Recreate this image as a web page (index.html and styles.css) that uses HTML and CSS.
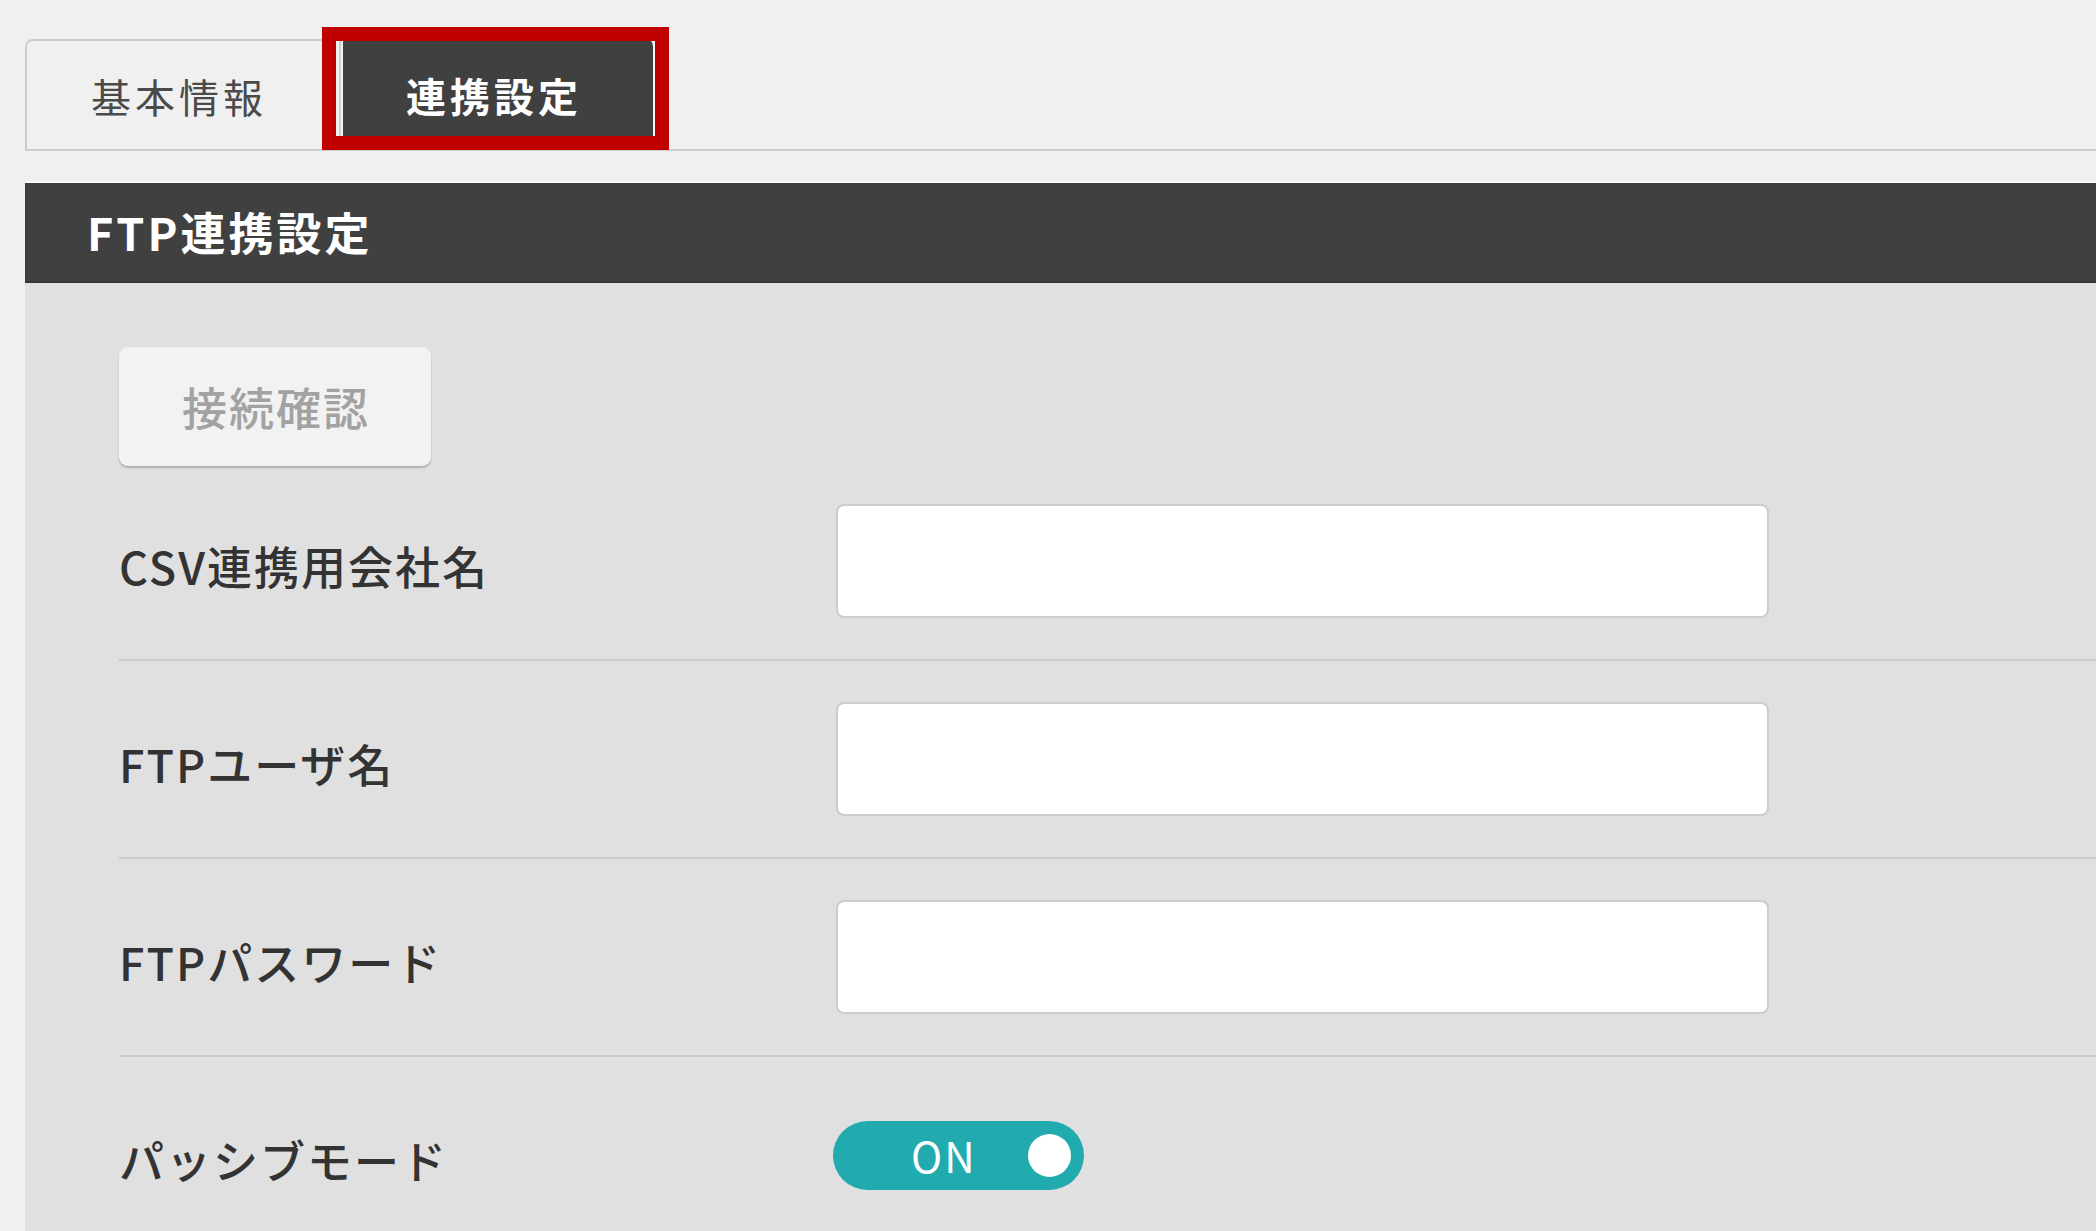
FILE: index.html
```html
<!DOCTYPE html>
<html lang="ja">
<head>
<meta charset="utf-8">
<title>連携設定</title>
<link rel="stylesheet" href="styles.css">
</head>
<body>
<div class="page">
  <div class="tabs">
    <div class="tab">基本情報</div>
    <div class="tab tab-active">連携設定<span class="highlight"></span></div>
  </div>
  <div class="section-header">FTP連携設定</div>
  <div class="panel">
    <button class="btn-check" type="button">接続確認</button>
    <div class="row">
      <div class="label">CSV連携用会社名</div>
      <input class="field" type="text">
    </div>
    <div class="row">
      <div class="label">FTPユーザ名</div>
      <input class="field" type="text">
    </div>
    <div class="row">
      <div class="label">FTPパスワード</div>
      <input class="field" type="password">
    </div>
    <div class="row row-last">
      <div class="label">パッシブモード</div>
      <div class="control">
        <div class="toggle"><span class="toggle-text">ON</span><span class="knob"></span></div>
      </div>
    </div>
  </div>
</div>
</body>
</html>
```

FILE: styles.css
```css
html, body {
  margin: 0;
  padding: 0;
  height: 100%;
  overflow: hidden;
  background: #f0f0f0;
  font-family: "Noto Sans CJK JP", "Noto Sans", sans-serif;
}

.page {
  padding: 39px 0 0 25px;
  min-height: 100%;
  box-sizing: border-box;
  display: flex;
  flex-direction: column;
}

.tabs {
  flex: none;
  display: flex;
  height: 112px;
  border-bottom: 2px solid #cdcdcd;
  box-sizing: border-box;
}

.tab {
  width: 316px;
  box-sizing: border-box;
  border: 2px solid #cdcdcd;
  border-bottom: none;
  border-radius: 8px 0 0 0;
  background: #f0f0f0;
  color: #4a4a4a;
  font-size: 40px;
  letter-spacing: 4px;
  display: flex;
  align-items: center;
  justify-content: center;
  padding: 2px 8px 0 0;
}

.tab-active {
  position: relative;
  width: 314px;
  background: #404040;
  color: #ffffff;
  font-weight: 700;
  border: none;
  border-left: 2px solid #f4f4f4;
  border-right: 2px solid #f4f4f4;
  border-radius: 0 8px 0 0;
}

.highlight {
  position: absolute;
  left: -21px;
  top: -12px;
  right: -16px;
  bottom: -1px;
  border: 14px solid #c00000;
}

.section-header {
  flex: none;
  margin-top: 32px;
  height: 100px;
  box-sizing: border-box;
  background: #404040;
  box-shadow: 0 -2px 0 #fbfbfb;
  border-bottom: 2px solid #353535;
  color: #ffffff;
  font-weight: 700;
  font-size: 45px;
  letter-spacing: 3px;
  line-height: 98px;
  padding-left: 62px;
}

.panel {
  flex: 1 0 auto;
  background: #e0e0e0;
  padding: 64px 0 0 94px;
}

.btn-check {
  display: block;
  width: 312px;
  height: 119px;
  border: none;
  border-radius: 9px;
  background: #f2f2f2;
  box-shadow: 0 2px 2px rgba(0, 0, 0, 0.22);
  color: #a2a2a2;
  font-family: "Noto Sans CJK JP", sans-serif;
  font-size: 45px;
  font-weight: 500;
  letter-spacing: 2px;
  padding: 0 0 0 2px;
  margin: 0 0 -3px 0;
}

.row {
  display: flex;
  align-items: center;
  padding: 41px 0;
  border-bottom: 2px solid #cbcbcb;
}

.row-last {
  border-bottom: none;
}

.label {
  width: 717px;
  flex: none;
  color: #333333;
  font-size: 45px;
  font-weight: 500;
  letter-spacing: 2px;
  line-height: 1.2;
  padding-top: 10px;
}

.field {
  width: 933px;
  height: 114px;
  box-sizing: border-box;
  border: 2px solid #cccccc;
  border-radius: 8px;
  background: #ffffff;
  margin: 0;
  padding: 0;
}

.control {
  height: 114px;
  display: flex;
  align-items: center;
}

.toggle {
  width: 251px;
  height: 69px;
  border-radius: 35px;
  background: #21abae;
  display: flex;
  align-items: center;
  box-sizing: border-box;
  padding-left: 78px;
  margin-left: -3px;
}

.toggle-text {
  color: #ffffff;
  font-size: 42px;
  font-weight: 400;
  letter-spacing: 2px;
  width: 117px;
  line-height: 1;
}

.knob {
  width: 43px;
  height: 43px;
  border-radius: 50%;
  background: #ffffff;
}
```
